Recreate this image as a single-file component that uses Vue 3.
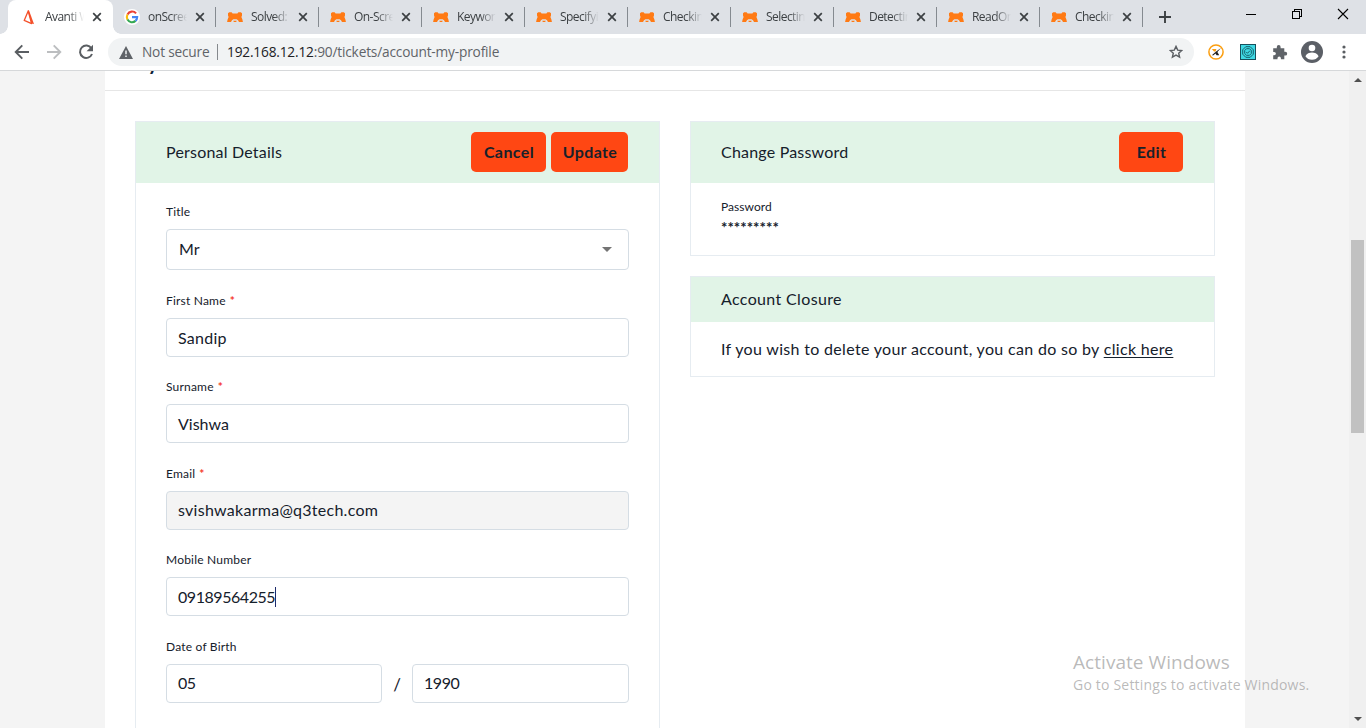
<script setup>
const tabs = [
  { title: 'Avanti West', icon: 'avanti', active: true },
  { title: 'onScreen', icon: 'google' },
  { title: 'Solved: R', icon: 'katalon' },
  { title: 'On-Scree', icon: 'katalon' },
  { title: 'Keyword', icon: 'katalon' },
  { title: 'Specifying', icon: 'katalon' },
  { title: 'Checking', icon: 'katalon' },
  { title: 'Selecting', icon: 'katalon' },
  { title: 'Detecting', icon: 'katalon' },
  { title: 'ReadOnly', icon: 'katalon' },
  { title: 'Checking', icon: 'katalon' },
]

const fields = [
  { label: 'First Name', value: 'Sandip', required: true, cls: 'wide' },
  { label: 'Surname', value: 'Vishwa', required: true },
  { label: 'Email', value: 'svishwakarma@q3tech.com', required: true, disabled: true, cls: 'wide' },
  { label: 'Mobile Number', value: '09189564255', focused: true, cls: 'digits' },
]
</script>

<template>
  <div class="window">
    <header class="tabstrip">
      <div class="tabs">
        <div v-for="(tab, i) in tabs" :key="i" class="tab" :class="{ active: tab.active, divided: i > 0 }">
          <svg v-if="tab.icon === 'avanti'" class="favicon" viewBox="0 0 16 16">
            <path d="M7.2 2 3.2 11.4 10.6 14.6Z" fill="#fff" stroke="#f4502a" stroke-width="1.3" stroke-linejoin="round" />
            <path d="M6.8 1.2 8 1.4 13 15 10.4 14.4Z" fill="#f4502a" />
          </svg>
          <svg v-else-if="tab.icon === 'google'" class="favicon google" viewBox="0 0 16 16">
            <circle cx="8" cy="8" r="8" fill="#fff" />
            <path d="M12.05 4.35A5.2 5.2 0 0 0 3.5 5.4" fill="none" stroke="#ea4335" stroke-width="2.1" />
            <path d="M3.5 5.4a5.2 5.2 0 0 0 0 5.2" fill="none" stroke="#fbbc05" stroke-width="2.1" />
            <path d="M3.5 10.6A5.2 5.2 0 0 0 11.5 11.9" fill="none" stroke="#34a853" stroke-width="2.1" />
            <path d="M8 8.1h5.2a5.2 5.2 0 0 1-1.7 3.8" fill="none" stroke="#4285f4" stroke-width="2.1" />
          </svg>
          <svg v-else class="favicon" viewBox="0 0 16 16">
            <path d="M1 4.2 2.2 3.2H4.6L5.6 4.5h4.8l1-1.3h2.4L15 4.2V6.6L14.4 8l1 2.4.5 2.6H12L11 11.2 9.6 10.2H6.4L5 11.2 4 13H.1L.6 10.4 1.6 8 1 6.6Z" fill="#ff7a14" />
            <path d="M6.3 11.7h3.4l-.5 1.3H6.8Z" fill="#ff7a14" />
          </svg>
          <span class="title">{{ tab.title }}</span>
          <svg class="close" viewBox="0 0 10 10"><path d="M1.2 1.2l7.6 7.6M8.8 1.2 1.2 8.8" stroke="#3c4043" stroke-width="1.7" /></svg>
        </div>
      </div>
      <svg class="newtab" viewBox="0 0 12 12"><path d="M6 0v12M0 6h12" stroke="#3c4043" stroke-width="1.9" /></svg>
      <div class="controls">
        <svg viewBox="0 0 12 12" shape-rendering="crispEdges"><path d="M1 6.5h10" stroke="#000" /></svg>
        <svg viewBox="0 0 12 12" shape-rendering="crispEdges"><path d="M1.5 3.5h7v7h-7zM3.5 3.5v-2h7v7h-2" fill="none" stroke="#000" /></svg>
        <svg viewBox="0 0 12 12"><path d="M1 1l10 10M11 1 1 11" stroke="#000" stroke-width="1.1" /></svg>
      </div>
    </header>

    <div class="toolbar">
      <svg class="nav" viewBox="0 0 16 16"><path d="M15 8H2M8.3 1.4 1.7 8l6.6 6.6" fill="none" stroke="#5a5e62" stroke-width="1.9" /></svg>
      <svg class="nav" viewBox="0 0 16 16"><path d="M1 8h13M7.7 1.4 14.3 8l-6.6 6.6" fill="none" stroke="#bcbec0" stroke-width="1.9" /></svg>
      <svg class="nav reload" viewBox="0 0 16 16">
        <path d="M13.4 4.3A6.2 6.2 0 1 0 14 10" fill="none" stroke="#5a5e62" stroke-width="2" />
        <path d="M15 .8v6.4H8.6Z" fill="#5a5e62" />
      </svg>
      <div class="omnibox">
        <svg class="warn" viewBox="0 0 14 13"><path d="M7 0l7 13H0Z" fill="#5f6368" /><path d="M7 4.6v3.6M7 9.5v1.6" stroke="#f1f3f4" stroke-width="1.5" /></svg>
        <span class="insecure">Not secure</span>
        <span class="bar"></span>
        <span class="url"><b>192.168.12.12</b>:90/tickets/account-my-profile</span>
        <svg class="star" viewBox="0 0 14 14"><path d="M7 1.4l1.7 3.7 4 .4-3 2.7.9 4L7 10.1l-3.6 2.1.9-4-3-2.7 4-.4Z" fill="none" stroke="#5a5e62" stroke-width="1.4" /></svg>
      </div>
      <div class="extensions">
        <svg viewBox="0 0 16 16">
          <circle cx="8" cy="8" r="7.1" fill="#fff" stroke="#fb9e10" stroke-width="1.5" />
          <path d="M3.8 5h4.6L7.6 7.6 6 7.4Z" fill="#fb9e10" />
          <path d="M12.9 4 9.4 8l1.8 3.2H8.6L7.4 9.6 5.6 11.2H3.8l4-3.4Z" fill="#222" />
        </svg>
        <svg viewBox="0 0 16 16">
          <rect x=".5" y=".5" width="15" height="15" fill="#3fd8e3" stroke="#17505c" />
          <path d="M5.8 2.7h4.4l3.1 3.1v4.4l-3.1 3.1H5.8l-3.1-3.1V5.8ZM6.5 4.7h3l1.8 1.8v3l-1.8 1.8h-3L4.7 9.5v-3Z" fill="none" stroke="#16616b" />
          <path d="M6.3 8l1.2 1.3 2.4-2.6" fill="none" stroke="#16616b" />
        </svg>
        <svg viewBox="0 0 16 16"><path d="M1.2 4.2h3.6V3a1.9 1.9 0 0 1 3.8 0v1.2h3.7v3.6h1a1.9 1.9 0 0 1 0 3.8h-1v3.7H8.9v-1a1.7 1.7 0 0 0-3.4 0v1H1.2v-4h1a1.7 1.7 0 0 0 0-3.4h-1Z" fill="#5f6368" /></svg>
        <svg class="avatar" viewBox="0 0 22 22">
          <circle cx="11" cy="11" r="11" fill="#5b5f66" />
          <circle cx="11" cy="7" r="3.3" fill="#fff" />
          <path d="M4.4 15.2c1.1-2.5 4.2-3.6 6.6-3.6s5.5 1.1 6.6 3.6A8 8 0 0 1 11 18.8a8 8 0 0 1-6.6-3.6Z" fill="#fff" />
        </svg>
        <svg class="menu" viewBox="0 0 4 14"><g fill="#5a5e62"><circle cx="2" cy="2" r="1.6" /><circle cx="2" cy="7" r="1.6" /><circle cx="2" cy="12" r="1.6" /></g></svg>
      </div>
    </div>

    <div class="viewport">
      <main class="page">
        <div class="heading"><h1>My Profile</h1></div>
        <div class="columns">
          <section class="card personal">
            <div class="card-head tall">
              <h2>Personal Details</h2>
              <div class="actions">
                <button class="btn cancel">Cancel</button>
                <button class="btn update">Update</button>
              </div>
            </div>
            <div class="form">
              <div class="field first">
                <label>Title</label>
                <div class="input select"><span>Mr</span><i class="caret"></i></div>
              </div>
              <div v-for="f in fields" :key="f.label" class="field">
                <label>{{ f.label }}<em v-if="f.required">*</em></label>
                <div class="input" :class="{ disabled: f.disabled }">
                  <span :class="f.cls">{{ f.value }}</span><i v-if="f.focused" class="cursor"></i>
                </div>
              </div>
              <div class="field">
                <label>Date of Birth</label>
                <div class="date">
                  <div class="input month"><span class="digits">05</span></div>
                  <span class="slash">/</span>
                  <div class="input year"><span class="digits">1990</span></div>
                </div>
              </div>
            </div>
          </section>

          <div class="side">
            <section class="card password">
              <div class="card-head tall">
                <h2>Change Password</h2>
                <button class="btn edit">Edit</button>
              </div>
              <div class="pw-body">
                <div class="pw-label">Password</div>
                <div class="pw-stars">*********</div>
              </div>
            </section>
            <section class="card closure">
              <div class="card-head">
                <h2 class="h-closure">Account Closure</h2>
              </div>
              <p>If you wish to delete your account, you can do so by <a>click here</a></p>
            </section>
          </div>
        </div>
      </main>
      <div class="scrollbar">
        <i class="up"></i>
        <div class="thumb"></div>
        <i class="down"></i>
      </div>
    </div>

    <div class="watermark">
      <div class="wm-title">Activate Windows</div>
      <div class="wm-text">Go to Settings to activate Windows.</div>
    </div>
  </div>
</template>

<style>
body { margin: 0; overflow: hidden; }
</style>

<style scoped>
* { box-sizing: border-box; }
svg { display: block; flex: none; }
.window { position: relative; width: 1366px; height: 728px; overflow: hidden; display: flex; flex-direction: column; font-family: "Open Sans", "Noto Sans", sans-serif; }

.tabstrip { height: 34px; flex: none; display: flex; align-items: center; background: #dee1e6; padding-left: 9px; }
.tabs { display: flex; height: 34px; }
.tab { position: relative; width: 103px; height: 34px; display: flex; align-items: center; padding-left: 12px; }
.tab.active { background: #fff; border-radius: 8px 8px 0 0; width: 105px; margin: 0 -1px 0 -1px; padding-left: 13px; }
.tab.active::before, .tab.active::after { content: ""; position: absolute; bottom: 0; width: 8px; height: 8px; }
.tab.active::before { left: -8px; background: radial-gradient(circle at 0 0, transparent 7.5px, #fff 8px); }
.tab.active::after { right: -8px; background: radial-gradient(circle at 100% 0, transparent 7.5px, #fff 8px); }
.tab.divided::after { content: ""; position: absolute; right: -1px; top: 7px; width: 1px; height: 20px; background: #858a90; }
.favicon { width: 16px; height: 16px; }
.title { margin-left: 8px; width: 39px; overflow: hidden; white-space: nowrap; font-size: 12px; line-height: 18px; letter-spacing: -0.55px; color: #3c4043; -webkit-mask-image: linear-gradient(90deg, #000 58%, transparent 100%); mask-image: linear-gradient(90deg, #000 58%, transparent 100%); }
.close { width: 10px; height: 10px; margin-left: 8px; }
.newtab { width: 12px; height: 12px; margin-left: 17px; }
.controls { display: flex; gap: 34px; margin: -6px 17px 0 auto; }
.controls svg { width: 12px; height: 12px; }

.toolbar { height: 37px; flex: none; display: flex; align-items: center; background: #fff; border-bottom: 1px solid #d6d8da; padding: 0 0 0 14px; }
.nav { width: 16px; height: 16px; margin-right: 16px; }
.reload { margin-right: 14px; }
.omnibox { width: 1086px; height: 28px; border-radius: 14px; background: #f1f3f4; display: flex; align-items: center; padding: 0 11px; font-size: 13.7px; white-space: nowrap; color: #5f6368; }
.warn { width: 14px; height: 13px; }
.insecure { margin-left: 9px; width: 67px; letter-spacing: -0.2px; }
.bar { width: 1px; height: 16px; background: #85898d; margin: 0 9px 0 8px; }
.url { letter-spacing: -0.18px; }
.insecure, .url { line-height: 18px; margin-top: -1px; }
.url b { font-weight: 400; color: #202124; }
.star { width: 14px; height: 14px; margin-left: auto; }
.extensions { display: flex; align-items: center; gap: 16px; margin-left: 14px; }
.extensions svg { width: 16px; height: 16px; }
.extensions svg.avatar { width: 22px; height: 22px; margin: 0 -3px; }
.extensions svg.menu { width: 4px; height: 14px; margin-left: 6px; }

.viewport { flex: 1; min-height: 0; overflow: hidden; display: flex; background: #f4f4f4; }
.page { width: 1140px; margin-left: 105px; background: #fff; font-family: Lato, sans-serif; color: #15202b; }
.heading { height: 20px; border-bottom: 1px solid #e6e6e6; overflow: hidden; display: flex; align-items: flex-end; padding: 0 30px 16px; }
.heading h1 { margin: 0; font-size: 20px; line-height: 24px; font-weight: 700; white-space: nowrap; color: #0a2239; letter-spacing: -1px; text-indent: -5px; }
.columns { display: flex; gap: 30px; padding: 30px 30px 0; align-items: flex-start; }
.card { width: 525px; border: 1px solid #e6ecf1; background: #fff; }
.card-head { background: #e1f4e7; display: flex; align-items: center; justify-content: space-between; height: 45px; padding: 0 31px 2px 30px; }
.card-head.tall { height: 61px; }
h2 { margin: 0; font-size: 16px; line-height: 20px; font-weight: 400; letter-spacing: 0.2px; }
.h-closure { letter-spacing: 0.35px; }
.actions { display: flex; gap: 5px; }
.btn { height: 40px; border: 0; border-radius: 5px; padding: 0 0 0 1px; background: #ff4713; color: #18212a; font: 700 16px/40px Lato, sans-serif; text-align: center; letter-spacing: 0.4px; }
.cancel { width: 75px; }
.update { width: 77px; }
.edit { width: 64px; }
.personal { height: 660px; }
.form { padding: 19px 30px 0; }
.field { display: flex; flex-direction: column; gap: 9px; margin-bottom: 20.4px; }
.field.first { margin-bottom: 21px; }
label { height: 18px; font-size: 12px; line-height: 19px; letter-spacing: 0.2px; }
label em { font-style: normal; font-weight: 700; font-size: 12px; line-height: 12px; color: #f5392b; margin-left: 4px; }
.input { height: 39px; border: 1px solid #d5dde4; border-radius: 4px; display: flex; align-items: center; padding: 0 11px; font-size: 16px; line-height: 20px; background: #fff; }
.wide { letter-spacing: 0.27px; }
.digits { letter-spacing: -0.45px; }
.first .input { height: 41px; padding: 0 16px 2px 12px; justify-content: space-between; }
.caret { border: 5px solid transparent; border-top-color: #747474; border-bottom: 0; margin-top: 2px; }
.disabled { background: #f4f4f4; }
.cursor { width: 1px; height: 20px; background: #1c2a6b; }
.date { display: flex; }
.month { width: 216px; }
.year { width: 217px; }
.slash { width: 30px; text-align: center; font-size: 17px; line-height: 42px; height: 39px; }
.side { display: flex; flex-direction: column; gap: 20px; }
.password { height: 135px; }
.pw-body { padding: 15px 30px; }
.pw-label { font-size: 12px; line-height: 18px; letter-spacing: 0.05px; }
.pw-stars { font-size: 15px; line-height: 20px; font-weight: 700; padding-top: 1px; letter-spacing: 0.05px; }
.closure { height: 101px; }
.closure p { margin: 0; padding: 17px 30px; font-size: 16px; line-height: 20px; white-space: nowrap; letter-spacing: 0.32px; }
.closure a { text-decoration: underline; text-underline-offset: 2px; }

.scrollbar { width: 17px; margin-left: auto; background: #f0f0f0; display: flex; flex-direction: column; align-items: center; padding: 7px 0 7px; }
.up { border: 4px solid transparent; border-bottom-color: #505050; border-top: 0; }
.down { border: 4px solid transparent; border-top-color: #505050; border-bottom: 0; margin-top: auto; }
.thumb { width: 13px; height: 193px; margin-top: 158px; background: #c1c1c1; }

.watermark { position: absolute; left: 1073px; top: 650px; color: rgba(150, 150, 150, 0.66); white-space: nowrap; }
.wm-title { font-size: 19px; line-height: 24px; letter-spacing: 0.05px; }
.wm-text { font-size: 14px; line-height: 22px; letter-spacing: 0.2px; }
</style>
